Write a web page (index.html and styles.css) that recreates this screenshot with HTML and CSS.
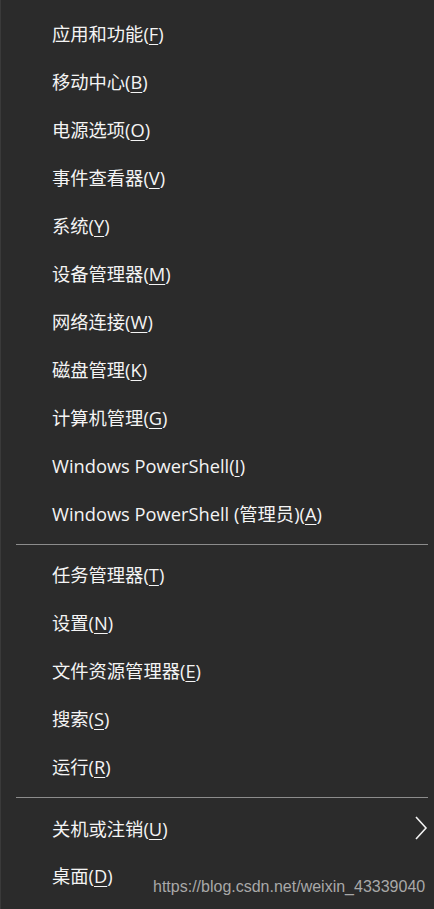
FILE: index.html
```html
<!DOCTYPE html>
<html lang="zh-CN">
<head>
    <meta charset="UTF-8">
    <title>Win+X</title>
    <link rel="stylesheet" href="styles.css">
</head>
<body>
    <div class="menu">
        <div class="item">应用和功能(<u>F</u>)</div>
        <div class="item">移动中心(<u>B</u>)</div>
        <div class="item">电源选项(<u>O</u>)</div>
        <div class="item">事件查看器(<u>V</u>)</div>
        <div class="item">系统(<u>Y</u>)</div>
        <div class="item">设备管理器(<u>M</u>)</div>
        <div class="item">网络连接(<u>W</u>)</div>
        <div class="item">磁盘管理(<u>K</u>)</div>
        <div class="item">计算机管理(<u>G</u>)</div>
        <div class="item">Windows PowerShell(<u>I</u>)</div>
        <div class="item">Windows PowerShell (管理员)(<u>A</u>)</div>
        <div class="sep"></div>
        <div class="item">任务管理器(<u>T</u>)</div>
        <div class="item">设置(<u>N</u>)</div>
        <div class="item">文件资源管理器(<u>E</u>)</div>
        <div class="item">搜索(<u>S</u>)</div>
        <div class="item">运行(<u>R</u>)</div>
        <div class="sep"></div>
        <div class="item sub">
            <span>关机或注销(<u>U</u>)</span>
            <svg class="chev" width="14" height="24" viewBox="0 0 14 24">
                <path d="M2 1 L12 12 L2 23" fill="none" stroke="#f2f2f2" stroke-width="1.6"/>
            </svg>
        </div>
        <div class="item">桌面(<u>D</u>)</div>
        <div class="mark">https://blog.csdn.net/weixin_43339040</div>
    </div>
</body>
</html>
```

FILE: styles.css
```css
html, body {
    margin: 0;
    padding: 0;
    background-color: #2b2b2b;
}
.menu {
    position: relative;
    height: 909px;
    box-sizing: border-box;
    padding-top: 11px;
    border-left: 1px solid #3a3a3a;
    font-family: "Open Sans", "Noto Sans CJK SC", sans-serif;
    font-size: 18.3px;
    color: #f4f4f4;
}
.item {
    height: 48px;
    box-sizing: border-box;
    padding-bottom: 4px;
    display: flex;
    align-items: center;
    padding-left: 51px;
    padding-right: 6px;
}
.item u {
    text-decoration-thickness: 1px;
    text-underline-offset: 3px;
}
.sub {
    justify-content: space-between;
    padding-bottom: 2px;
}
.chev {
    display: block;
}
.sep {
    height: 1px;
    margin: 5px 6px 7px 15px;
    background-color: #8c8c8c;
}
.mark {
    position: absolute;
    left: 152px;
    top: 878px;
    font-family: "Liberation Sans", Arial, sans-serif;
    font-size: 16px;
    color: #a8a8a8;
}
```
